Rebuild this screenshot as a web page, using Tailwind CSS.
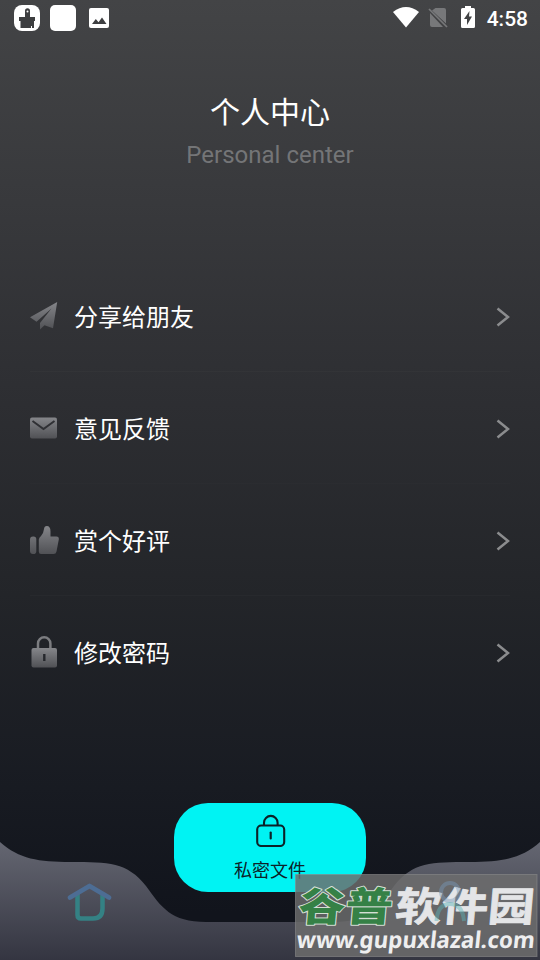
<!DOCTYPE html>
<html lang="zh-CN">
<head>
<meta charset="utf-8">
<title>个人中心</title>
<script src="https://cdn.jsdelivr.net/npm/@tailwindcss/browser@4"></script>
</head>
<body class="w-[540px] h-[960px] overflow-hidden">
<svg class="absolute size-0" aria-hidden="true">
  <defs>
    <linearGradient id="ico" x1="0" y1="0" x2="0" y2="1"><stop offset="0" stop-color="#85868a"/><stop offset="1" stop-color="#505155"/></linearGradient>
  </defs>
</svg>
<div class="relative flex flex-col w-[540px] h-[960px] overflow-hidden text-white bg-[linear-gradient(180deg,#434446_0%,#38393c_21%,#2e2f33_40%,#232529_62%,#181b22_82%,#11141c_95%)] font-['Roboto','Noto_Sans_CJK_SC',sans-serif]">
  <header class="flex h-9 shrink-0 items-center pl-[14px] pr-3">
    <div class="flex items-center">
      <svg class="size-[26px]" viewBox="0 0 26 26"><rect width="26" height="26" rx="8" fill="#fff"/><path d="M11 12V5.800a2.500 2.500 0 0 1 5 0V12h5v4h-1v7H6.500v-7H5v-4z" fill="#3d3e40"/><circle cx="13.500" cy="6.500" r="1" fill="#fff"/><path d="M17.500 21v2" stroke="#fff"/></svg>
      <div class="ml-[10px] size-[26px] rounded-[5px] bg-white"></div>
      <svg class="ml-[13px] size-5" viewBox="0 0 20 20"><rect width="20" height="20" rx="2" fill="#fff"/><path d="M3 16l3.800-5 2.700 3.200 3.500-4.700 4.500 6.500z" fill="#3e3f41"/></svg>
    </div>
    <div class="ml-auto flex items-center">
      <svg class="mr-px mb-[2px] w-[26px] h-[21px]" viewBox="0 0 26 21"><path d="M0 5Q13-5 26 5L13 20.500z" fill="#fff"/></svg>
      <svg class="ml-[8px] mr-px w-5 h-[22px]" viewBox="0 0 20 22"><path d="M7.500 1h8.500a2 2 0 0 1 2 2v13.500L4 3.500zM2 6l13 14H4a2 2 0 0 1-2-2z" fill="#77787a"/><path d="M1 2l18 18" stroke="#77787a" stroke-width="1.700"/></svg>
      <svg class="ml-[12px] mr-[2px] mb-[2px] w-[14px] h-[22px]" viewBox="0 0 14 22"><path d="M4 0h6v2h2.500a1.500 1.500 0 0 1 1.500 1.500v17a1.500 1.500 0 0 1-1.500 1.500h-11A1.500 1.500 0 0 1 0 20.500v-17A1.500 1.500 0 0 1 1.500 2H4z" fill="#fff"/><path d="M8.500 5L3 13h3v6l5-8.500H8z" fill="#414244"/></svg>
      <span class="ml-[10px] pt-[2px] text-[21px] leading-9 font-medium">4:58</span>
    </div>
  </header>

  <section class="mt-[56px] flex flex-col items-center">
    <h1 class="text-[30px] leading-[42px]">个人中心</h1>
    <p class="-mt-px text-[24px] leading-[44px] text-[#747577]">Personal center</p>
  </section>

  <ul class="mt-[83px] px-[30px]">
    <li class="flex h-28 items-center border-b border-white/[0.02] pt-[3px]">
      <svg class="mb-[2px] w-[28px] h-[28px]" viewBox="0 0 28 28"><path fill="url(#ico)" d="M27.200 0L0 15.200l6.500 4.500L21.500 6.500 10 21v6.500l4.500-4.300 8.500 3z"/></svg>
      <span class="ml-4 pt-[2px] text-[24px]">分享给朋友</span>
      <svg class="ml-auto w-[14px] h-5" viewBox="0 0 14 20"><path d="M1.500 1.500L12 10 1.500 18.500" fill="none" stroke="#8b8c8e" stroke-width="2.500"/></svg>
    </li>
    <li class="flex h-28 items-center border-b border-white/[0.01] pt-[3px]">
      <svg class="mb-[3px] w-[28px] h-[28px]" viewBox="0 0 28 28"><rect y="3.500" width="27" height="21" rx="2" fill="url(#ico)"/><path d="M2.500 7l11 8 11-8" fill="none" stroke="#2f3034" stroke-width="2"/></svg>
      <span class="ml-4 pt-[2px] text-[24px]">意见反馈</span>
      <svg class="ml-auto w-[14px] h-5" viewBox="0 0 14 20"><path d="M1.500 1.500L12 10 1.500 18.500" fill="none" stroke="#8b8c8e" stroke-width="2.500"/></svg>
    </li>
    <li class="flex h-28 items-center border-b border-white/[0.02] pt-[3px]">
      <svg class="mb-[2px] w-[29px] h-[30px]" viewBox="0 0 29 30"><path fill="url(#ico)" d="M3 11.500h.5a2.800 2.800 0 0 1 2.800 2.800v12a2.800 2.800 0 0 1-2.800 2.800H3a3 3 0 0 1-3-3v-11.600a3 3 0 0 1 3-3zM8.800 14.500Q9 12.500 11 11Q13.500 8.500 14 4Q14.300 1 16.800 1Q20.500 1 20.500 6.500V11.500H26.500Q29.300 11.500 28.800 14.500L26.500 26.500Q26 29 23.500 29H11Q8.800 29 8.800 26.500z"/></svg>
      <span class="ml-[15px] pt-[2px] text-[24px]">赏个好评</span>
      <svg class="ml-auto w-[14px] h-5" viewBox="0 0 14 20"><path d="M1.500 1.500L12 10 1.500 18.500" fill="none" stroke="#8b8c8e" stroke-width="2.500"/></svg>
    </li>
    <li class="flex h-28 items-center pt-[2px]">
      <svg class="mb-[3px] w-[28px] h-[32px]" viewBox="0 0 28 32"><path d="M8 13V7.500a6.200 6.200 0 0 1 12.400 0V13" fill="none" stroke="#7c7d80" stroke-width="2.500"/><rect x="1.500" y="12" width="25.500" height="19.500" rx="2" fill="url(#ico)"/><path d="M14.300 18v7" stroke="#25272c" stroke-width="2.400"/></svg>
      <span class="ml-4 pt-[2px] text-[24px]">修改密码</span>
      <svg class="ml-auto w-[14px] h-5" viewBox="0 0 14 20"><path d="M1.500 1.500L12 10 1.500 18.500" fill="none" stroke="#8b8c8e" stroke-width="2.500"/></svg>
    </li>
  </ul>

  <nav class="relative mt-auto h-[158px] w-full shrink-0">
    <svg class="absolute bottom-0 left-0 w-[540px] h-[120px]" viewBox="0 840 540 120">
      <defs><linearGradient id="nav" x1="0" y1="840" x2="0" y2="960" gradientUnits="userSpaceOnUse"><stop stop-color="#656772"/><stop offset="1" stop-color="#343541"/></linearGradient></defs>
      <path fill="url(#nav)" d="M0 842C19 859 39 862 70 862C109 862 127 862 146 886C161 907 171 922 206 922H334C369 922 379 907 394 886C413 862 431 862 470 862C501 862 521 859 540 842V960H0z"/>
      <path d="M77.500 894v21q0 3.500 3.500 3.500h12q9.500 0 9.500-10V894" fill="none" stroke="#348184" stroke-width="4.500"/>
      <path d="M70 897.500L89.500 886 109 897.500" fill="none" stroke="#4d6d94" stroke-width="4.800" stroke-linecap="round" stroke-linejoin="round"/>
    </svg>
    <button class="absolute left-[174px] top-[1px] flex h-[89px] w-48 flex-col items-center rounded-[34px] bg-[#00f3f3] pt-[11px] text-[#0c2228]">
      <svg class="ml-[2px] w-[30px] h-[33px]" viewBox="0 0 30 33"><rect x="1.200" y="11.500" width="27" height="20.500" rx="4" fill="none" stroke="currentColor" stroke-width="2.100"/><path d="M8 11.500V8.700a6.800 6.800 0 0 1 13.600 0v2.800" fill="none" stroke="currentColor" stroke-width="2.100"/><path d="M14.700 18.500v6" stroke="currentColor" stroke-width="2.200" stroke-linecap="round"/></svg>
      <span class="mt-[10px] text-[18px] leading-7">私密文件</span>
    </button>
    <svg class="absolute left-[295px] top-[72px] w-[243px] h-[84px] overflow-visible" viewBox="295 874 243 84">
      <rect x="295.500" y="874.500" width="241.500" height="82" fill="#6d6d6d" fill-opacity=".83" stroke="#8b8b8b" stroke-opacity=".6"/>
      <g transform="translate(377 0) skewX(-5)" font-family="'Noto Sans CJK SC',sans-serif" font-weight="900" font-size="40" stroke-linejoin="round" paint-order="stroke">
        <text x="1" y="921.500" textLength="94" lengthAdjust="spacingAndGlyphs" fill="#358146" stroke="#d4dfd5" stroke-width="2">谷普</text>
        <text x="98" y="921.500" font-weight="700" textLength="139" lengthAdjust="spacingAndGlyphs" fill="#e4e5e7" stroke="#e4e5e7" stroke-width=".8">软件园</text>
      </g>
      <g transform="translate(296 948) skewX(-6)">
        <text x="0" y="0" textLength="238" lengthAdjust="spacingAndGlyphs" font-family="'Noto Sans','Open Sans',sans-serif" font-weight="700" font-size="23" fill="#eeeeef">www.gupuxlazal.com</text>
      </g>
      <g fill="none" stroke-width="4"><circle cx="450" cy="892" r="9" stroke="#7898bb" stroke-opacity=".45"/><path d="M436.500 921q1-17 13.500-17t14 17" stroke="#5cb4b8" stroke-opacity=".45"/></g>
    </svg>
  </nav>
</div>
</body>
</html>
